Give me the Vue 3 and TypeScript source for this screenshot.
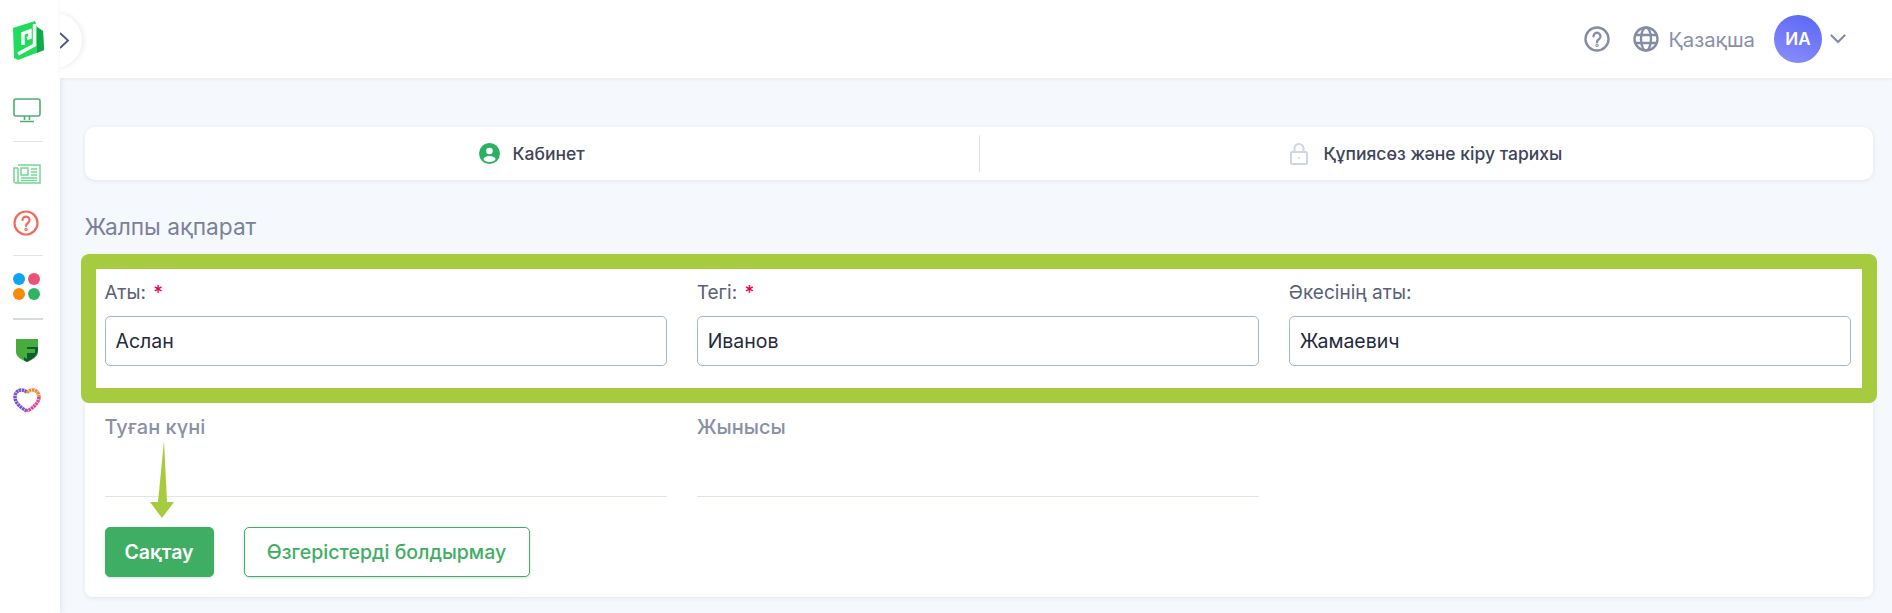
<script setup lang="ts">
// Профиль: вкладки и форма общей информации
const nameFields = [
  { label: 'Аты:', value: 'Аслан', required: true },
  { label: 'Тегі:', value: 'Иванов', required: true },
  { label: 'Әкесінің аты:', value: 'Жамаевич', required: false },
]
const staticFields = ['Туған күні', 'Жынысы']
const dots = [
  { cx: 19, cy: 11, fill: '#0ea5ee' },
  { cx: 34, cy: 11, fill: '#ea5275' },
  { cx: 19, cy: 26, fill: '#f68a0b' },
  { cx: 34, cy: 26, fill: '#2db563' },
]
</script>

<template>
  <div class="page">
    <aside class="side">
      <svg class="logo" width="32" height="40" viewBox="0 0 32 40" fill="none">
        <path d="M0 7 22 0l2 6 6 4 1 19L5 39l-4-2Z" fill="#1fdc5c" />
        <path d="M24 6l6 4 1 19-7 3V21Z" fill="#12a94c" />
        <path d="M21.500 3v21L5 33" stroke="#fff" stroke-width="3.400" />
        <path d="M10 24V12.500l7-2.500v6.500l-3 1" stroke="#fff" stroke-width="3.400" />
      </svg>
      <svg class="ic monitor" width="28" height="25" viewBox="0 0 28 25" fill="none" stroke="#4cae73" stroke-width="1.600">
        <rect x="1" y="1" width="26" height="17" rx="2" />
        <path d="M11.500 18v4M16.500 18v4M7 23.500h14" />
      </svg>
      <i class="sep" />
      <svg class="ic news" width="28" height="20" viewBox="0 0 28 20" fill="none" stroke="#77d596" stroke-width="1.500">
        <path d="M5 1h22v18H3a2 2 0 0 1-2-2V4h4M5 4v13a2 2 0 0 1-2 2" />
        <rect x="8" y="4" width="7" height="7" />
        <path d="M18 5h6M18 8h6M18 11h6M8 14h16M8 16.500h16" />
      </svg>
      <svg class="ic quest" width="26" height="26" viewBox="0 0 26 26" fill="none" stroke="#f4695f" stroke-width="2.200">
        <circle cx="13" cy="13" r="11.500" />
        <path d="M9.500 10a3.500 3.500 0 1 1 5.400 3c-1.300.8-1.900 1.500-1.900 3" stroke-linecap="round" />
        <circle cx="13" cy="19.500" r=".6" />
      </svg>
      <i class="sep sep-a" />
      <svg class="ic dots" width="53" height="37" viewBox="0 0 53 37">
        <circle v-for="d in dots" :key="d.fill" :cx="d.cx" :cy="d.cy" r="6" :fill="d.fill" />
      </svg>
      <i class="sep sep-b" />
      <svg class="ic shield" width="22" height="24" viewBox="0 0 22 24">
        <path d="M0 1h22v13c0 5-6 8-11 10C6 22 0 19 0 14Z" fill="#47ac3c" />
        <path d="M22 12c-1 6-6 9-11 12l-3-2V9h14v3Z" fill="#0c5b33" />
        <path d="M6 4h15v4H11v3h8v4h-8v6l-5-3Z" fill="#47ac3c" />
      </svg>
      <svg class="ic heart" width="28" height="26" viewBox="0 0 28 26" fill="none" stroke-width="3.500" stroke-dasharray="2.500 .5">
        <path d="M14 23C8 20 2 15 2 9c0-4 3-7 6-7 3 0 5 1 6 3" stroke="#7a55c9" />
        <path d="M14 5c1-2 3-3 6-3 3 0 6 3 6 7" stroke="#ef8a3c" />
        <path d="M26 9c0 6-6 11-12 14" stroke="#e0469b" />
      </svg>
    </aside>

    <div class="main">
      <header class="top">
        <span class="bump">
          <svg width="11" height="17" viewBox="0 0 11 17" fill="none" stroke="#4f5871" stroke-width="1.800" stroke-linecap="round">
            <path d="M1.500 1.500 9 8.500l-7.500 7" />
          </svg>
        </span>
        <svg class="help" width="26" height="26" viewBox="0 0 26 26" fill="none" stroke="#858ca6" stroke-width="2.400">
          <circle cx="13" cy="13" r="11.500" />
          <path d="M9.500 10.200a3.500 3.500 0 1 1 5.400 3c-1.300.8-1.900 1.400-1.900 2.800" stroke-linecap="round" />
          <circle cx="13" cy="19.300" r=".5" />
        </svg>
        <svg class="globe" width="26" height="26" viewBox="0 0 26 26" fill="none" stroke="#858ca6" stroke-width="2.400">
          <circle cx="13" cy="13" r="11.500" />
          <ellipse cx="13" cy="13" rx="5" ry="11.500" />
          <path d="M2.500 9h21M2.500 17h21" />
        </svg>
        <span class="lang">Қазақша</span>
        <span class="avatar">ИА</span>
        <svg class="caret" width="16" height="10" viewBox="0 0 16 10" fill="none" stroke="#858ca6" stroke-width="2.200" stroke-linecap="round">
          <path d="M1.500 1.500 8 8l6.500-6.500" />
        </svg>
      </header>

      <main class="content">
        <nav class="tabs">
          <div class="tab">
            <svg width="21" height="21" viewBox="0 0 21 21">
              <circle cx="10.500" cy="10.500" r="10.500" fill="#2bb161" />
              <circle cx="10.500" cy="8" r="3.300" fill="#fff" />
              <ellipse cx="10.500" cy="16" rx="6" ry="3" fill="#fff" />
            </svg>
            <span>Кабинет</span>
          </div>
          <div class="tab">
            <svg width="18" height="22" viewBox="0 0 18 22" fill="none" stroke="#cdd6e1" stroke-width="2">
              <rect x="1" y="9" width="16" height="12" rx="1.500" />
              <path d="M4.500 9V5.500a4.500 4.500 0 0 1 9 0V9" />
              <circle cx="9" cy="15" r="1" fill="#cdd6e1" stroke="none" />
            </svg>
            <span>Құпиясөз және кіру тарихы</span>
          </div>
        </nav>

        <h2 class="title">Жалпы ақпарат</h2>

        <section class="card">
          <div class="grid">
            <div v-for="f in nameFields" :key="f.label" class="field">
              <label>{{ f.label }} <b v-if="f.required">*</b></label>
              <input type="text" :value="f.value" />
            </div>
          </div>
          <div class="grid second">
            <div v-for="s in staticFields" :key="s" class="static">
              <span>{{ s }}</span>
              <i />
            </div>
          </div>
          <div class="actions">
            <button type="button" class="btn save">Сақтау</button>
            <button type="button" class="btn cancel">Өзгерістерді болдырмау</button>
          </div>

          <!-- аннотации скриншота поверх формы -->
          <div class="mark" />
          <svg class="arrow" width="26" height="78" viewBox="0 0 26 78">
            <path d="M15 0 18 61h7L13 77 1 61h8Z" fill="#a6cb3e" />
          </svg>
        </section>
      </main>
    </div>
  </div>
</template>

<style>
html, body { margin: 0; background: #f5f8fc; }
</style>

<style scoped>
.page { display: flex; width: 1892px; height: 613px; overflow: hidden; font-family: Inter, "Noto Sans", sans-serif; background: #f5f8fc; }

.side {
  width: 60px; flex: none; background: #fff; box-shadow: 1px 0 6px rgba(60,80,120,.1);
  display: flex; flex-direction: column; align-items: flex-start; position: relative; z-index: 1;
}
.logo { margin: 21px 0 0 13px; }
.ic { display: block; }
.monitor { margin: 37px 0 0 13px; }
.sep { display: block; width: 30px; height: 1px; background: #dfe3ea; margin: 18px 0 0 13px; }
.news { margin: 22px 0 0 13px; }
.quest { margin: 26px 0 0 13px; }
.sep-a { margin-top: 19px; }
.dots { margin: 12px 0 0 0; }
.sep-b { height: 2px; margin-top: 13px; background: #d5dae3; }
.shield { margin: 18px 0 0 16px; }
.heart { margin: 26px 0 0 13px; }

.main { flex: 1; min-width: 0; display: flex; flex-direction: column; }
.top {
  height: 78px; flex: none; background: #fff; box-shadow: 0 1px 3px rgba(60,80,120,.08);
  display: flex; align-items: center; position: relative; z-index: 2; padding-right: 46px; justify-content: flex-end;
}
.bump {
  position: absolute; left: -33px; top: 13px; width: 55px; height: 55px; border-radius: 50%;
  background: #fff; box-shadow: 2px 0 5px rgba(60,80,120,.1); clip-path: inset(-8px -8px -8px 33px);
  display: flex; align-items: center; justify-content: flex-end; padding-right: 12px; box-sizing: border-box;
}
.help { margin-right: 23px; }
.globe { margin-right: 9px; }
.lang { font-size: 20.300px; color: #8a90a8; margin-right: 19px; }
.avatar {
  width: 48px; height: 48px; border-radius: 50%; background: linear-gradient(200deg, #5a66f5, #8b8ffb);
  color: #fff; font-size: 17px; font-weight: 600; display: flex; align-items: center; justify-content: center;
  margin-right: 8px;
}

.content { padding: 49px 19px 0 24.500px; }
.tabs {
  height: 53px; background: #fff; border-radius: 10px; box-shadow: 0 1px 4px rgba(60,80,120,.1);
  display: grid; grid-template-columns: 1fr 1fr; align-items: center;
}
.tab {
  display: flex; align-items: center; justify-content: center; gap: 13px; height: 37px;
  font-size: 17.500px; font-weight: 500; color: #3e4558;
}
.tab + .tab { border-left: 1px solid #e2e6ec; gap: 15px; }
.title { margin: 34px 0 0; font-size: 22.700px; line-height: 26px; font-weight: 400; color: #7a8299; }

.card {
  position: relative; margin-top: 14px; height: 343px; box-sizing: border-box; padding: 27px 22px 0 20px;
  background: #fff; border-radius: 0 0 8px 8px; box-shadow: 0 1px 4px rgba(60,80,120,.1);
}
.grid { display: grid; grid-template-columns: repeat(3, 1fr); column-gap: 30px; }
.field label { display: block; font-size: 19px; line-height: 24px; color: #596178; }
.field label b { color: #e6004c; font-weight: 500; margin-left: 2px; }
.field input {
  display: block; width: 100%; height: 50px; box-sizing: border-box; margin-top: 11px; padding: 0 10px;
  border: 1px solid #a3b8cf; border-radius: 5px; background: #fff;
  font: 19.500px Inter, "Noto Sans", sans-serif; color: #1f2a3d; outline: none;
}
.second { margin-top: 50px; }
.static span { display: block; font-size: 20px; line-height: 22px; font-weight: 500; color: #8a90a8; }
.static i { display: block; height: 1px; background: #dfe5ee; margin-top: 58px; }
.actions { display: flex; gap: 30px; margin-top: 30px; }
.btn {
  height: 50px; box-sizing: border-box; border-radius: 5px; border: 1px solid #3fae63; padding: 0;
  font: 500 19.500px Inter, "Noto Sans", sans-serif; box-shadow: 0 1px 3px rgba(60,80,120,.2);
}
.save { width: 109px; background: #3fae63; color: #fff; font-weight: 600; }
.cancel { width: 286px; background: #fff; color: #3fae63; }

.mark {
  position: absolute; left: -3.500px; right: -4px; top: 0; height: 149px; box-sizing: border-box;
  border: 15px solid #a6cb3e; border-radius: 8px; pointer-events: none;
}
.arrow { position: absolute; left: 64px; top: 187px; }
</style>
